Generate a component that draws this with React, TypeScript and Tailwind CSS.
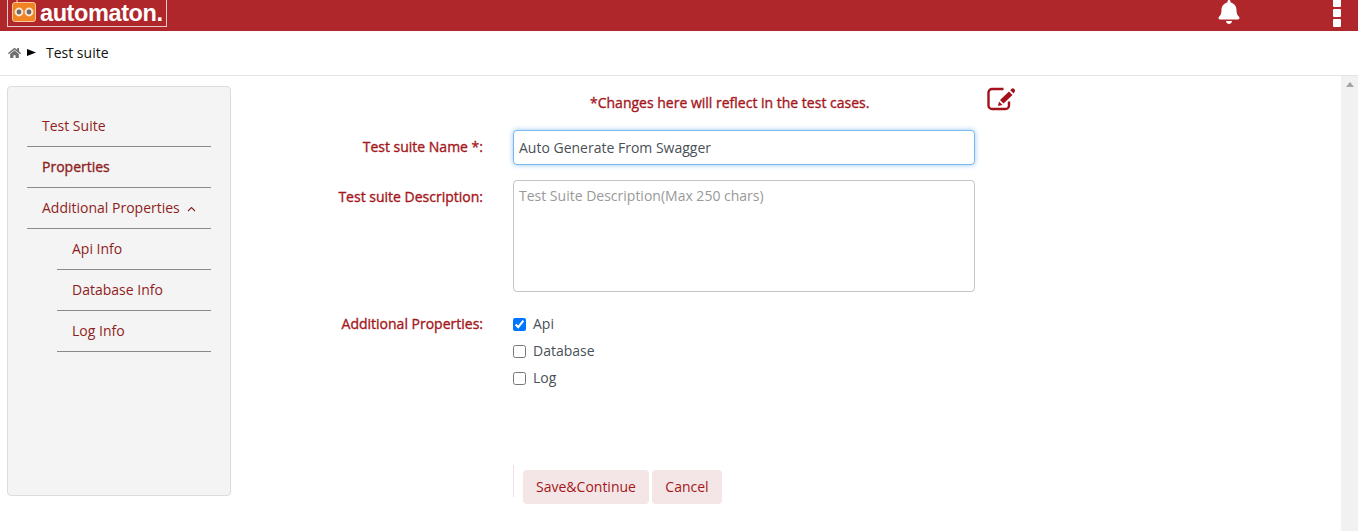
import { FaHome, FaBell } from "react-icons/fa";

const font = { fontFamily: '"Open Sans", sans-serif' };
const strong = "[-webkit-text-stroke:0.35px_currentColor]";

function NavItem({ label, bold, sub, chevron }: { label: string; bold?: boolean; sub?: boolean; chevron?: boolean }) {
  return (
    <div className={`h-[41px] border-b border-[#8a8a8a] flex items-center text-[14px] text-[#8f1d22] pb-px ${sub ? "ml-[30px] pl-[15px]" : "pl-[15px]"} ${bold ? "[-webkit-text-stroke:0.35px_currentColor]" : ""}`}>
      {label}
      {chevron && (
        <svg width="9" height="6" viewBox="0 0 9 6" className="ml-[7px] mt-[2px]" fill="none" stroke="#8f1d22" strokeWidth="1.1">
          <path d="M1 5 L4.5 1.5 L8 5" />
        </svg>
      )}
    </div>
  );
}

function Check({ label, checked }: { label: string; checked?: boolean }) {
  return (
    <label className="flex items-center h-[27px] text-[14px] text-[#495057]">
      <input type="checkbox" defaultChecked={checked} className="w-[13px] h-[13px] m-0 mt-px accent-[#0075ff]" />
      <span className="ml-[7px]">{label}</span>
    </label>
  );
}

export default function App() {
  return (
    <div style={font} className="h-[531px] w-[1358px] overflow-hidden bg-white flex flex-col">
      <header className="h-[31px] shrink-0 bg-[#b0272b] flex items-start relative">
        <div className="ml-[7px] w-[160px] h-[27px] border-x border-b border-[#e6c9ca] flex items-start pl-[4px]">
          <svg width="24" height="22" viewBox="0 0 24 22" className="shrink-0">
            <rect x="0.5" y="2.5" width="23" height="19" rx="2.5" fill="#f28322" stroke="#f7c79c" />
            <path d="M5 3 V0" stroke="#f7c79c" strokeWidth="1.2" />
            <circle cx="7" cy="12" r="4.4" fill="#fbe3cf" />
            <circle cx="17" cy="12" r="4.4" fill="#fbe3cf" />
            <circle cx="7" cy="12" r="2.4" fill="#6d6a6a" />
            <circle cx="17" cy="12" r="2.4" fill="#6d6a6a" />
          </svg>
          <span className="ml-[4px] text-white font-bold text-[23.5px] leading-[24px] tracking-[-0.4px] mt-[1px]" style={{ fontFamily: '"Liberation Sans", sans-serif' }}>
            automaton.
          </span>
        </div>
        <div className="ml-auto flex items-start">
          <FaBell className="text-white w-[22px] h-[24px] mr-[93px]" />
          <div className="flex flex-col gap-[2px] mr-[17px] -mt-[1px]">
            <span className="block w-[8px] h-[8px] rounded-[1px] bg-white" />
            <span className="block w-[8px] h-[8px] rounded-[1px] bg-white" />
            <span className="block w-[8px] h-[8px] rounded-[1px] bg-white" />
          </div>
        </div>
      </header>

      <div className="h-[45px] shrink-0 border-b border-[#e5e5e5] flex items-center pl-[8px] pb-px">
        <FaHome className="text-[#6f6f6f] w-[13px] h-[12px]" />
        <svg width="9" height="7" viewBox="0 0 9 7" className="ml-[6px]">
          <path d="M0 0 L9 3.5 L0 7 Z" fill="#000" />
        </svg>
        <span className="ml-[10px] text-[14px] text-[#111]">Test suite</span>
      </div>

      <div className="flex-1 flex min-h-0">
        <main className="flex-1 flex items-start pl-[7px]">
          <aside className="w-[224px] h-[410px] mt-[10px] shrink-0 bg-[#f4f4f4] border border-[#dcdcdc] rounded-[4px] pt-[19px] pl-[19px] pr-[19px]">
            <NavItem label="Test Suite" />
            <NavItem label="Properties" bold />
            <NavItem label="Additional Properties" chevron />
            <NavItem label="Api Info" sub />
            <NavItem label="Database Info" sub />
            <NavItem label="Log Info" sub />
          </aside>

          <form className="ml-[28px] w-[784px] flex flex-col">
            <div className={`relative h-[54px] pt-[17px] pl-[331px] text-[14px] text-[#a5161b] leading-[20px] ${strong}`}>
              <span>*Changes here will reflect in the test cases.</span>
              <svg viewBox="0 0 28 24" className="absolute left-[728px] top-[11px] w-[28px] h-[24px]" fill="none">
                <path d="M16.5 2 H5 A3.5 3.5 0 0 0 1.5 5.5 V18.5 A3.5 3.5 0 0 0 5 22 H18.5 A3.5 3.5 0 0 0 22 18.5 V14.5" stroke="#a5111a" strokeWidth="2.4" />
                <path d="M13 13 L22 4.5 L25.5 8 L16.5 16.5 L15 15 Z M11 19 L12 14.5 L15.5 18 Z" fill="#a5111a" />
                <path d="M23.2 3.2 L25 1.5 Q25.8 0.9 26.6 1.5 L27.9 2.8 Q28.4 3.6 27.8 4.4 L26.6 6.4 Z" fill="#a5111a" />
              </svg>
            </div>

            <div className="flex items-start">
              <label className={`w-[224px] text-right text-[14px] text-[#a5161b] pt-[6px] ${strong}`}>Test suite Name *:</label>
              <input
                readOnly
                value="Auto Generate From Swagger"
                style={font}
                className="ml-[30px] w-[462px] h-[35px] px-[5px] text-[14px] text-[#495057] bg-white border border-[#7db8ec] rounded-[4px] shadow-[0_0_5px_rgba(80,160,240,0.6)] outline-none"
              />
            </div>

            <div className="flex items-start mt-[15px]">
              <label className={`w-[224px] text-right text-[14px] text-[#a5161b] pt-[6px] ${strong}`}>Test suite Description:</label>
              <textarea
                readOnly
                placeholder="Test Suite Description(Max 250 chars)"
                style={font}
                className="ml-[30px] w-[462px] h-[112px] px-[5px] py-[5px] text-[14px] leading-[20px] text-[#495057] placeholder:text-[#999] bg-white border border-[#c4c4c4] rounded-[4px] outline-none resize-none"
              />
            </div>

            <div className="flex items-start mt-[18px]">
              <label className={`w-[224px] text-right text-[14px] text-[#a5161b] pt-[3px] ${strong}`}>Additional Properties:</label>
              <div className="ml-[30px] flex flex-col">
                <Check label="Api" checked />
                <Check label="Database" />
                <Check label="Log" />
              </div>
            </div>

            <div className="flex items-start mt-[79px] ml-[254px]">
              <div className="w-px h-[32px] bg-[#f0e3e3] mt-[-5px]" />
              <button type="button" style={font} className="ml-[9px] h-[34px] w-[126px] pb-[2px] bg-[#f4e6e6] rounded-[4px] text-[14px] text-[#a5161b]">Save&amp;Continue</button>
              <button type="button" style={font} className="ml-[3px] h-[34px] w-[70px] pb-[2px] bg-[#f4e6e6] rounded-[4px] text-[14px] text-[#a5161b]">Cancel</button>
            </div>
          </form>
        </main>

        <div className="w-[17px] shrink-0 bg-[#f1f1f1] flex justify-center pt-[6px]">
          <svg width="8" height="5" viewBox="0 0 8 5"><path d="M4 0 L8 5 H0 Z" fill="#a3a3a3" /></svg>
        </div>
      </div>
    </div>
  );
}
